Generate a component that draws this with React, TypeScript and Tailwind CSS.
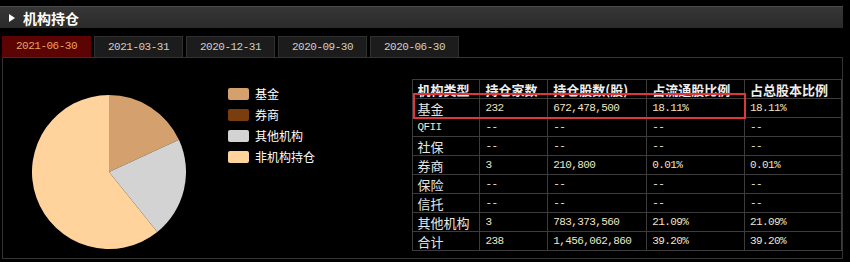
import { ReactNode } from "react";

const tabs = ["2021-06-30", "2021-03-31", "2020-12-31", "2020-09-30", "2020-06-30"];

const slices = [
  { name: "基金", value: 18.11, color: "#d4a06e" },
  { name: "券商", value: 0.01, color: "#7a3e0e" },
  { name: "其他机构", value: 21.09, color: "#d3d3d3" },
  { name: "非机构持仓", value: 60.79, color: "#ffd39b" },
];

const rows = [
  ["基金", "232", "672,478,500", "18.11%", "18.11%"],
  ["QFII", "--", "--", "--", "--"],
  ["社保", "--", "--", "--", "--"],
  ["券商", "3", "210,800", "0.01%", "0.01%"],
  ["保险", "--", "--", "--", "--"],
  ["信托", "--", "--", "--", "--"],
  ["其他机构", "3", "783,373,560", "21.09%", "21.09%"],
  ["合计", "238", "1,456,062,860", "39.20%", "39.20%"],
];

const headers = ["机构类型", "持仓家数", "持仓股数(股)", "占流通股比例", "占总股本比例"];
const colWidths = ["w-[68px]", "w-[68px]", "w-[99px]", "w-[98px]", "w-[97px]"];

const cjk = "font-['Noto_Sans_CJK_SC',sans-serif]";
const mono = "font-['Liberation_Mono','Noto_Sans_CJK_SC',monospace]";

function Pie() {
  const r = 77;
  let acc = 0;
  const pt = (p: number) => {
    const a = (p / 100) * Math.PI * 2;
    return `${(r + r * Math.sin(a)).toFixed(2)} ${(r - r * Math.cos(a)).toFixed(2)}`;
  };
  return (
    <svg width="154" height="154" viewBox="0 0 154 154" className="mt-[7px] shrink-0">
      {slices.map((s) => {
        const start = acc;
        acc += s.value;
        const large = s.value > 50 ? 1 : 0;
        return (
          <path
            key={s.name}
            d={`M ${r} ${r} L ${pt(start)} A ${r} ${r} 0 ${large} 1 ${pt(acc)} Z`}
            fill={s.color}
          />
        );
      })}
    </svg>
  );
}

function Cell({ children, className }: { children: ReactNode; className?: string }) {
  return (
    <td className={`h-[19px] border border-[#3c3c3c] pl-[5px] py-0 leading-none whitespace-nowrap ${className ?? ""}`}>
      {children}
    </td>
  );
}

export default function App() {
  return (
    <div className="relative w-[850px] h-[262px] bg-black overflow-hidden">
      <div className="w-[843px] pt-[6px]">
        <div className="h-[22px] border-t border-[#4a4a4a] bg-gradient-to-b from-[#363636] to-[#2a2a2a] flex items-center">
          <svg width="6" height="8" viewBox="0 0 6 8" className="ml-[9px]">
            <path d="M0 0 L6 4 L0 8 Z" fill="#ffffff" />
          </svg>
          <span className={`ml-[8px] text-[14px] font-bold text-white leading-none ${cjk}`}>机构持仓</span>
        </div>
        <div className="mt-[8px] pl-[2px] flex gap-[3px]">
          {tabs.map((t, i) => (
            <div
              key={t}
              className={`w-[89px] h-[21px] flex items-center justify-center text-[11px] tracking-[-0.5px] ${mono} ${
                i === 0
                  ? "bg-[#5c0404] text-[#e9a35a]"
                  : "bg-[#1c1c1c] border-t border-x border-[#303030] text-[#cfcfcf]"
              }`}
            >
              {t}
            </div>
          ))}
        </div>
        <div className="ml-[2px] h-[202px] border border-[#333] flex">
          <div className="w-[405px] flex items-start pl-[29px] pt-[30px]">
            <Pie />
            <div className="ml-[42px] flex flex-col gap-[9px]">
              {slices.map((s) => (
                <div key={s.name} className="flex items-center h-[12px]">
                  <span className="w-[21px] h-[12px] rounded-[2px]" style={{ backgroundColor: s.color }} />
                  <span className={`ml-[6px] text-[12px] text-white leading-none ${cjk}`}>{s.name}</span>
                </div>
              ))}
            </div>
          </div>
          <div className="pt-[21px] pl-[4px]">
            <table className="border-collapse table-fixed">
              <thead>
                <tr>
                  {headers.map((h, i) => (
                    <Cell key={h} className={`${colWidths[i]} text-[13px] font-bold text-[#eeeeee] ${cjk}`}>
                      {h}
                    </Cell>
                  ))}
                </tr>
              </thead>
              <tbody>
                {rows.map((row) => (
                  <tr key={row[0]}>
                    {row.map((c, i) => (
                      <Cell
                        key={i}
                        className={
                          i === 0 && row[0] !== "QFII"
                            ? `text-[13px] text-[#e6e6e6] ${cjk}`
                            : `text-[11px] tracking-[-0.6px] text-[#efe6c6] ${mono}`
                        }
                      >
                        {c}
                      </Cell>
                    ))}
                  </tr>
                ))}
              </tbody>
            </table>
          </div>
        </div>
      </div>
      <div className="absolute left-[413px] top-[93px] w-[333px] h-[26px] border-2 border-[#e0353b] pointer-events-none" />
    </div>
  );
}
